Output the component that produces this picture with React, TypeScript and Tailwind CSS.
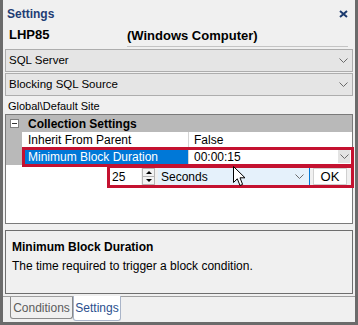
import React from "react";

function Chevron({ color = "#6a6a6a" }: { color?: string }) {
  return (
    <svg width="9" height="5" viewBox="0 0 9 5" className="block">
      <polyline points="0.5,0.5 4.5,4.5 8.5,0.5" fill="none" stroke={color} strokeWidth="1" />
    </svg>
  );
}

function Combo({ label }: { label: string }) {
  return (
    <div className="mx-[2px] h-[23px] flex items-center justify-between bg-[#e5e5e5] border border-[#adadad] pl-[3px] pr-[4px] text-[11.5px] text-black">
      <span>{label}</span>
      <Chevron />
    </div>
  );
}

function Cursor() {
  return (
    <svg width="13" height="21" viewBox="0 0 13 21" className="block">
      <path
        d="M0.5 0.5 L0.5 16.5 L4.3 12.8 L7 19.5 L9.6 18.4 L7 11.8 L12 11.8 Z"
        fill="#ffffff"
        stroke="#000000"
        strokeWidth="1"
        strokeLinejoin="round"
      />
    </svg>
  );
}

export default function App() {
  return (
    <div className="w-[358px] h-[325px] bg-[#f0f0f0] border-x-[3px] border-b-[3px] border-[#6b6b6b] flex flex-col font-['Liberation_Sans',Arial,sans-serif] text-black overflow-hidden">
      {/* title */}
      <div className="h-[28px] shrink-0 flex items-center justify-between pl-[4px] pr-[7px]">
        <span className="text-[12px] font-bold text-[#1f3d74]">Settings</span>
        <svg width="9" height="8" viewBox="0 0 9 8" className="block">
          <path d="M1 1 L8 7 M8 1 L1 7" stroke="#1b3a6e" strokeWidth="2" />
        </svg>
      </div>

      {/* machine row */}
      <div className="h-[19px] shrink-0 flex items-end text-[13px] font-bold">
        <span className="w-[124px] pl-[6px] pb-[3px]">LHP85</span>
        <span className="w-[221px] pb-[3px] border-b border-[#c4c4c4] leading-[15px]">(Windows Computer)</span>
      </div>

      <div className="mt-[2px]">
        <Combo label="SQL Server" />
      </div>
      <div className="mt-[1px]">
        <Combo label="Blocking SQL Source" />
      </div>

      <div className="h-[18px] shrink-0 flex items-center pl-[5px] pt-[2px] text-[11px]">Global\Default Site</div>

      {/* property grid */}
      <div className="relative mx-[2px] h-[110px] shrink-0 border border-[#7a7a7a] bg-white text-[12px]">
        <div className="h-[17px] flex items-center bg-[#b9b9b9]">
          <div className="w-[16px] flex justify-center pl-[1px]">
            <div className="w-[9px] h-[9px] border border-[#7f7f7f] bg-white flex items-center justify-center">
              <div className="w-[5px] h-[1px] bg-[#333]" />
            </div>
          </div>
          <span className="pl-[6px] font-bold">Collection Settings</span>
        </div>

        <div className="h-[16px] flex">
          <div className="w-[16px] bg-[#b9b9b9]" />
          <div className="w-[166px] flex items-center pl-[6px]">Inherit From Parent</div>
          <div className="flex-1 flex items-center pl-[5px] border-l border-[#d4d4d4]">False</div>
        </div>

        <div className="h-[17px] flex">
          <div className="w-[16px] bg-[#b9b9b9]" />
          <div className="w-[166px] flex items-center pl-[6px] bg-[#0078d7] text-white">Minimum Block Duration</div>
          <div className="flex-1 flex items-center justify-between pl-[5px] pr-[2px] border-l border-[#d4d4d4]">
            <span>00:00:15</span>
            <div className="w-[12px] h-[13px] bg-[#e3e3e3] flex items-center justify-center">
              <Chevron />
            </div>
          </div>
        </div>

        {/* highlight on the selected row */}
        <div className="absolute left-[16px] top-[32px] w-[332px] h-[20px] border-[3px] border-[#c41230] pointer-events-none" />

        {/* drop-down editor */}
        <div className="absolute left-[101px] top-[50px] w-[247px] h-[23px] border-[3px] border-[#c41230] bg-[#f0f0f0] flex items-stretch text-[12px]">
          <div className="w-[31px] bg-white flex items-center pl-[2px]">25</div>
          <div className="ml-[1px] w-[13px] flex flex-col border border-[#b5b5b5] bg-[#f3f3f3]">
            <div className="flex-1 flex items-center justify-center border-b border-[#b5b5b5]">
              <div className="w-0 h-0 border-x-[3px] border-x-transparent border-b-[3px] border-b-black" />
            </div>
            <div className="flex-1 flex items-center justify-center">
              <div className="w-0 h-0 border-x-[3px] border-x-transparent border-t-[3px] border-t-black" />
            </div>
          </div>
          <div className="ml-[3px] w-[152px] bg-[#e5f1fb] border-r border-[#0078d7] flex items-center justify-between pl-[3px] pr-[5px]">
            <span>Seconds</span>
            <Chevron />
          </div>
          <div className="ml-[3px] w-[34px] bg-white border border-[#d0d0d0] flex items-center justify-center text-[13px]">OK</div>
        </div>

        <div className="absolute left-[227px] top-[51px] pointer-events-none">
          <Cursor />
        </div>
      </div>

      {/* description */}
      <div className="mt-[6px] mx-[2px] h-[64px] shrink-0 border border-[#6e6e6e] pl-[6px] pt-[8px] text-[12px]">
        <div className="font-bold leading-[16px]">Minimum Block Duration</div>
        <div className="mt-[3px] leading-[16px]">The time required to trigger a block condition.</div>
      </div>

      {/* tabs */}
      <div className="mt-[2px] h-[1px] shrink-0 bg-[#a0a0a0]" />
      <div className="flex items-start pl-[7px] text-[12px]">
        <div className="w-[63px] h-[22px] border border-t-0 border-[#8a8a8a] rounded-b-[3px] flex items-center justify-center text-[#5c5c5c]">
          Conditions
        </div>
        <div className="-mt-[1px] w-[48px] h-[25px] bg-white border border-t-0 border-[#a9b4c8] rounded-b-[3px] flex items-center justify-center text-[#2b4f8e]">
          Settings
        </div>
      </div>
    </div>
  );
}
